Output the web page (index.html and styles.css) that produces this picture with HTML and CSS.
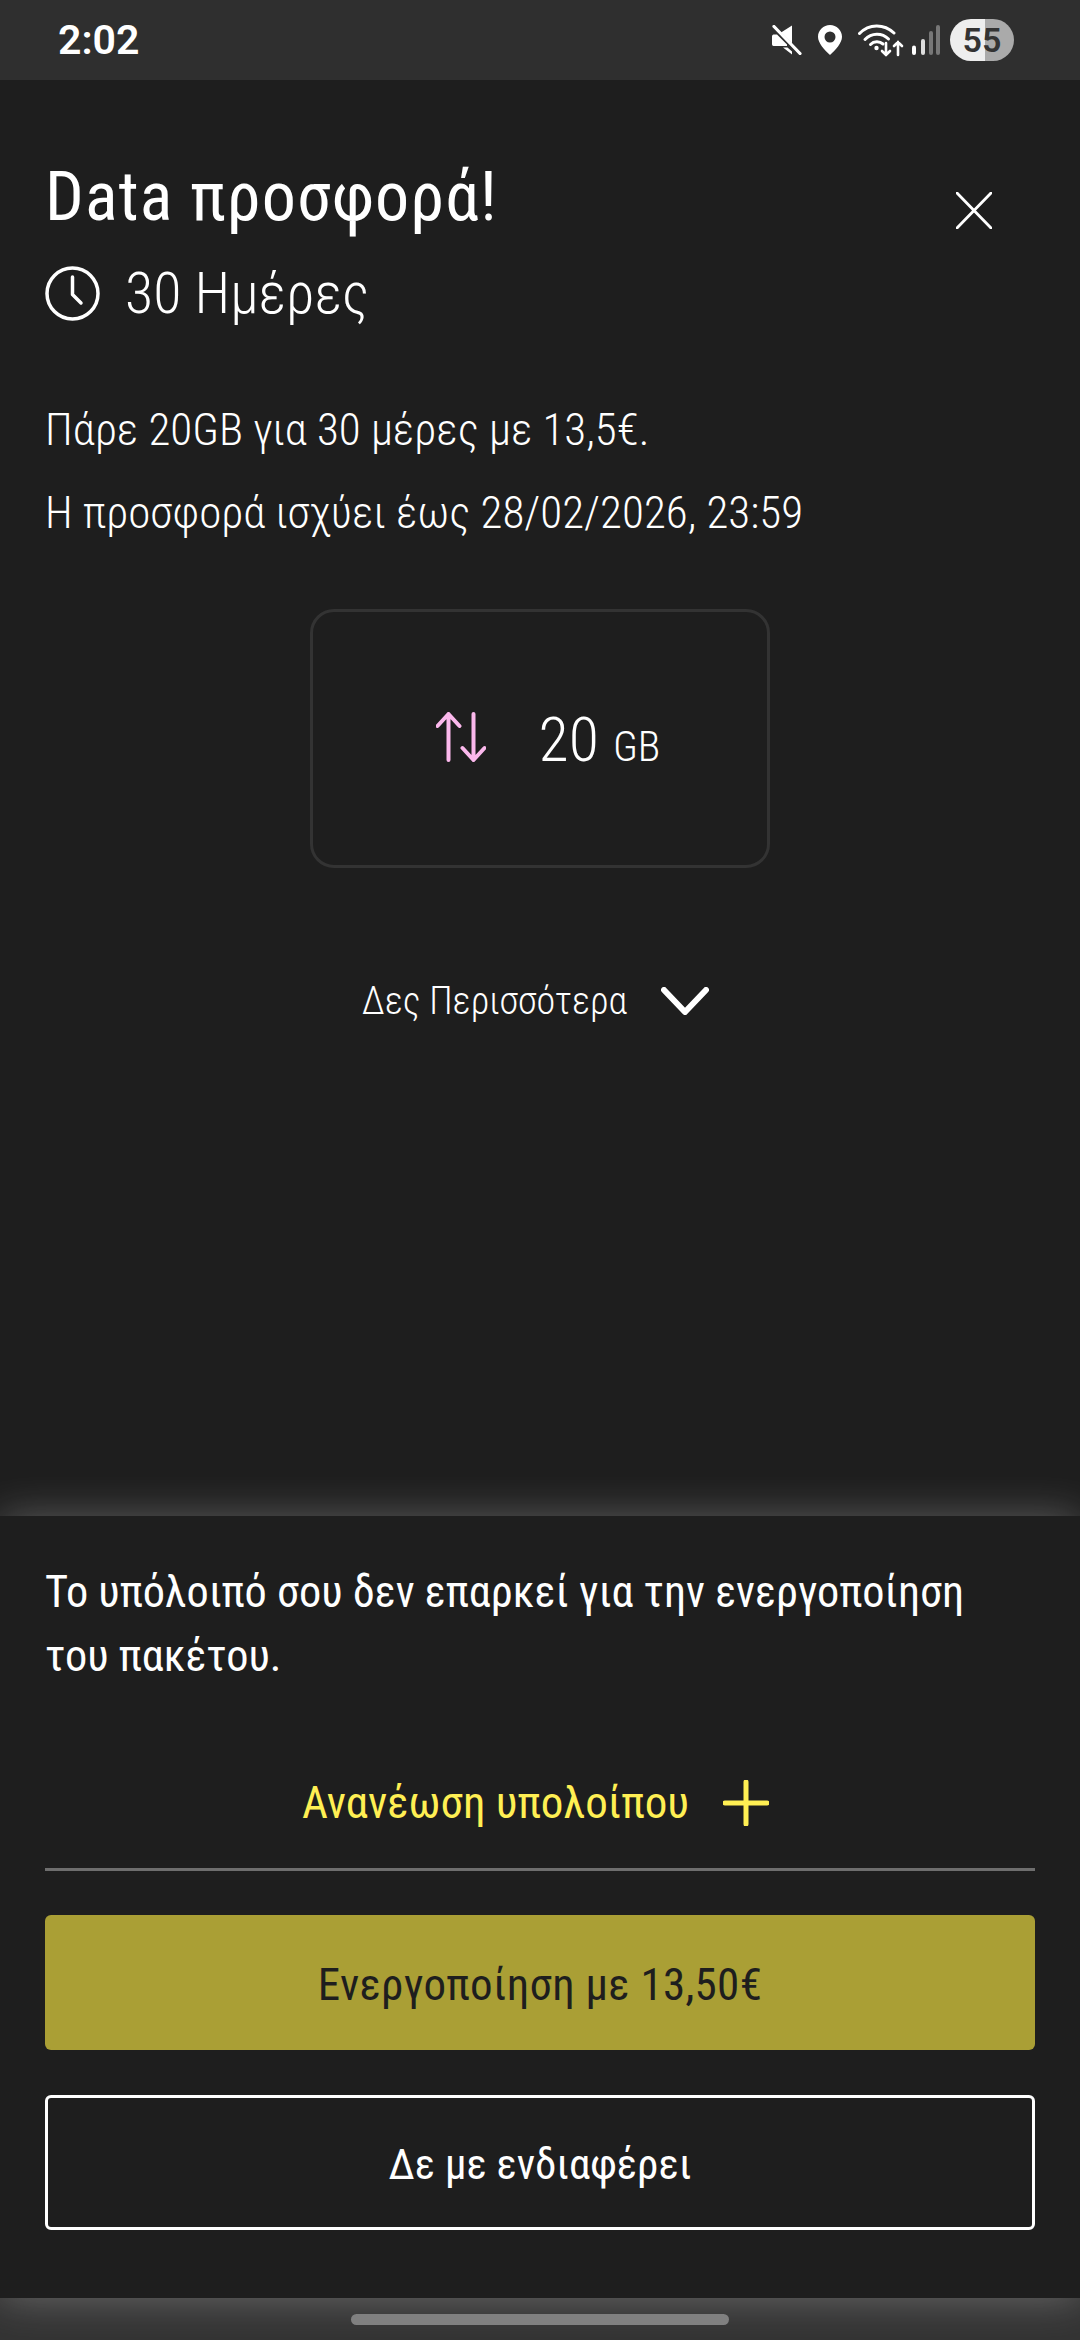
FILE: index.html
```html
<!DOCTYPE html>
<html lang="el">
<head>
  <meta charset="UTF-8">
  <title>Data προσφορά</title>
  <meta name="viewport" content="width=device-width, initial-scale=1.0">
  <link rel="stylesheet" href="styles.css">
</head>
<body>

<!-- Status bar -->
<div class="status-bar">
  <span class="clock">2:02</span>
  <div class="status-icons">
    <svg class="ic-mute" viewBox="0 0 30 30">
      <path d="M0 11.5C0 10.5 .6 9.500 1.600 9.500H5L15 19.500V21H6.500L1.600 21C.6 21 0 20 0 19Z M9 7.500L20 .5V18.500L9 7.500Z M11 22.500H15.500L20 26.500V29.500Z" fill="#fff"/>
      <path d="M2 1.500L28 28.500" stroke="#fff" stroke-width="3.200" stroke-linecap="round"/>
    </svg>
    <svg class="ic-pin" viewBox="0 0 24 30">
      <path fill-rule="evenodd" d="M12 0C5.4 0 0 5.2 0 11.7C0 18 6.6 25 12 30C17.4 25 24 18 24 11.7C24 5.2 18.6 0 12 0ZM12 6.5A5.5 5.5 0 1 1 12 17.5A5.5 5.5 0 1 1 12 6.5Z" fill="#fff"/>
    </svg>
    <svg class="ic-wifi" viewBox="0 0 46 34" fill="none" stroke="#fff" stroke-width="3" stroke-linecap="round">
      <path d="M1.5 10.5C11 .5 26 .5 36 10"/>
      <path d="M7 16.5C13.5 9.5 24 9.5 30.5 16"/>
      <path d="M12.500 21.500C16 18 21.500 18 25 21"/>
      <circle cx="18.500" cy="25" r="2.200" fill="#fff" stroke="none"/>
      <path d="M28 20V32M24 28L28 32L32 28" stroke-width="2.600"/>
      <path d="M40 32V19M36 23L40 19L44 23" stroke-width="2.600"/>
    </svg>
    <svg class="ic-signal" viewBox="0 0 29 30" stroke-linecap="round" stroke-width="4">
      <path d="M3 22.500V28" stroke="#fff"/>
      <path d="M12 16V28" stroke="#ddd"/>
      <path d="M20 8V28" stroke="#777"/>
      <path d="M27 2V28" stroke="#777"/>
    </svg>
    <span class="battery">55</span>
  </div>
</div>

<div class="offer">
  <div class="offer-head">
    <div>
      <h1 class="offer-title">Data προσφορά!</h1>
      <div class="offer-time">
        <svg class="ic-clock" viewBox="0 0 55 55" fill="none" stroke="#fff" stroke-width="3.500">
          <circle cx="27.500" cy="27.500" r="25.500"/>
          <path d="M27.500 11V28.500L36 37" stroke-linecap="round" stroke-linejoin="round"/>
        </svg>
        <span>30 Ημέρες</span>
      </div>
    </div>
    <svg class="ic-close" viewBox="0 0 36 37" fill="none" stroke="#fff" stroke-width="2.800" stroke-linecap="round">
      <path d="M1 1L35 36M35 1L1 36"/>
    </svg>
  </div>

  <p class="offer-line">Πάρε 20GB για 30 μέρες με 13,5€.</p>
  <p class="offer-line">Η προσφορά ισχύει έως 28/02/2026, 23:59</p>

  <div class="data-card">
    <svg class="ic-data" viewBox="0 0 50 50" fill="none" stroke="#fbb8ec" stroke-width="4" stroke-linecap="round" stroke-linejoin="round">
      <path d="M12.500 48V2M1.500 14L12.500 2L23.500 14"/>
      <path d="M37.500 2V48M26.500 36L37.500 48L48.500 36"/>
    </svg>
    <span class="data-amount">20</span>
    <span class="data-unit">GB</span>
  </div>

  <div class="see-more">
    <span>Δες Περισσότερα</span>
    <svg class="ic-chevron" viewBox="0 0 48 28" fill="none" stroke="#fff" stroke-width="6" stroke-linecap="round" stroke-linejoin="round">
      <path d="M3 3L24 25L45 3"/>
    </svg>
  </div>
</div>

<!-- Bottom sheet -->
<div class="panel">
  <p class="panel-text">Το υπόλοιπό σου δεν επαρκεί για την ενεργοποίηση<br>του πακέτου.</p>
  <div class="topup">
    <span>Ανανέωση υπολοίπου</span>
    <svg class="ic-plus" viewBox="0 0 46 46" fill="none" stroke="#ffef53" stroke-width="5" stroke-linecap="round">
      <path d="M23 2V44M2 23H44"/>
    </svg>
  </div>
  <div class="divider"></div>
  <button class="btn btn-primary">Ενεργοποίηση με 13,50€</button>
  <button class="btn btn-outline">Δε με ενδιαφέρει</button>
</div>

<div class="nav-bar">
  <div class="home-pill"></div>
</div>

</body>
</html>
```

FILE: styles.css
```css
* { box-sizing: border-box; }
html, body { margin: 0; height: 100%; }
body {
  height: 2340px;
  display: flex;
  flex-direction: column;
  background: #1e1e1e;
  color: #fff;
  font-family: Roboto, sans-serif;
  font-stretch: 75%;
  font-weight: 300;
}
svg { display: block; flex: none; }

/* status bar */
.status-bar {
  height: 80px;
  flex: none;
  background: #2f2f2f;
  display: flex;
  align-items: center;
  justify-content: space-between;
  padding: 0 66px 0 58px;
  font-stretch: 100%;
}
.clock { font-size: 41px; font-weight: 600; }
.status-icons { display: flex; align-items: center; }
.ic-mute { width: 30px; height: 30px; }
.ic-pin { width: 24px; height: 30px; margin-left: 16px; }
.ic-wifi { width: 46px; height: 34px; margin-left: 16px; }
.ic-signal { width: 29px; height: 30px; margin-left: 7px; }
.battery {
  width: 64px;
  height: 42px;
  margin-left: 10px;
  border-radius: 21px;
  background: linear-gradient(90deg, #eee 55%, #aaa 55%);
  color: #333;
  font-size: 34px;
  font-weight: 600;
  line-height: 42px;
  text-align: center;
}

/* offer */
.offer {
  flex: 1;
  padding: 78px 45px 0;
}
.offer-head { display: flex; justify-content: space-between; }
.offer-title { margin: 0; font-size: 68px; line-height: 78px; font-weight: 400; letter-spacing: 1.1px; }
.offer-time {
  display: flex;
  align-items: center;
  gap: 25px;
  margin-top: 26px;
  font-size: 58px;
  line-height: 62px;
}
.ic-clock { width: 55px; height: 55px; }
.ic-close { width: 36px; height: 37px; margin: 34px 43px 0 0; }
.offer-line { margin: 0; font-size: 45px; line-height: 83px; }
.offer-head + .offer-line { margin-top: 64px; }
.data-card {
  width: 460px;
  height: 259px;
  margin: 55px auto 0;
  border: 3px solid #333;
  border-radius: 24px;
  display: flex;
  align-items: baseline;
  justify-content: center;
  padding: 91px 0 0 16px;
}
.ic-data { width: 50px; height: 50px; margin-right: 53px; align-self: flex-start; margin-top: 9px; }
.data-amount { font-size: 62px; }
.data-unit { font-size: 42px; margin-left: 14px; }
.see-more {
  display: flex;
  align-items: center;
  justify-content: center;
  gap: 34px;
  margin: 111px 9px 0 0;
  font-size: 38px;
}
.ic-chevron { width: 48px; height: 28px; }

/* bottom sheet */
.panel {
  height: 782px;
  flex: none;
  z-index: 1;
  background: #1e1e1e;
  box-shadow: 0 0 40px rgba(255, 255, 255, 0.28);
  padding: 44px 45px 0;
}
.panel-text { margin: 0; font-size: 44.3px; line-height: 64px; font-weight: 400; }
.topup {
  display: flex;
  align-items: center;
  justify-content: center;
  gap: 34px;
  margin: 88px 9px 0 0;
  color: #ffef53;
  font-size: 45px;
  font-weight: 400;
}
.ic-plus { width: 46px; height: 46px; }
.divider { height: 3px; background: #6e6e6e; margin-top: 39px; }
.btn {
  display: block;
  width: 100%;
  height: 135px;
  border-radius: 6px;
  font-family: inherit;
  font-stretch: inherit;
  font-weight: 400;
  padding: 3px 0 0;
}
.btn-primary { margin-top: 44px; background: #aa9f35; border: none; color: #1e1e1e; font-size: 45px; letter-spacing: 0.3px; }
.btn-outline { margin-top: 45px; background: none; border: 3px solid #fff; color: #fff; font-size: 43px; }

/* nav */
.nav-bar {
  height: 42px;
  flex: none;
  background: #333;
  display: flex;
  justify-content: center;
  padding-top: 16px;
}
.home-pill { width: 378px; height: 11px; border-radius: 6px; background: #808080; z-index: 2; }
```
